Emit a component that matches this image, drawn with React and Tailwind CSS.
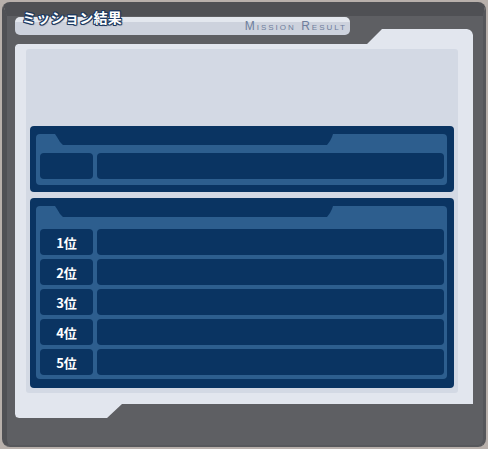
import React from "react";

const notchClip =
  "[clip-path:polygon(0_0,100%_0,calc(100%-1px)_3px,calc(100%-3px)_7px,calc(100%-6px)_100%,8px_100%,5px_8px,2px_3px)]";

function Frame({ children, top }) {
  return (
    <div className="relative rounded-[4px] bg-[#2d5e8e]">
      <div
        className={`absolute left-[19px] top-0 h-[11px] w-[278px] bg-[#0a3462] ${notchClip}`}
      />
      <div className={top}>{children}</div>
    </div>
  );
}

function Row({ label }) {
  return (
    <div className="flex h-[26px] gap-[4px]">
      <div className="flex w-[53px] items-center justify-center rounded-[4px] bg-[#0a3462] text-[13px] font-bold leading-none text-white [font-family:'Noto_Sans_CJK_JP','Noto_Sans',sans-serif]">
        {label}
      </div>
      <div className="flex-1 rounded-[4px] bg-[#0a3462]" />
    </div>
  );
}

export default function App() {
  const ranks = ["1位", "2位", "3位", "4位", "5位"];
  return (
    <div className="h-[449px] w-[488px] bg-[#b8b0ab] p-[2px]">
      <div className="relative h-full w-full rounded-[8px] border-t-[14px] border-r-[3px] border-b-[2px] border-l-[5px] border-t-[#4f5054] border-r-[#55565a] border-b-[#57585c] border-l-[#505155] bg-[#5e5f63]">
        {/* tab */}
        <div className="ml-[8px] mt-[1px] flex h-[18px] w-[335px] items-center justify-end rounded-[5px] bg-[linear-gradient(#e3e7ee_0,#e3e7ee_5px,#cdd2dd_5px)] pr-[3px]">
          <span className="text-[12px] leading-none tracking-[2px] text-[#6e7e9c] [font-family:'Liberation_Sans',sans-serif] [font-variant:small-caps]">
            Mission Result
          </span>
        </div>
        {/* title */}
        <div className="absolute left-[15px] top-[-7px] text-[14px] font-bold leading-[17px] tracking-[0.3px] text-white [font-family:'Noto_Sans_CJK_JP',sans-serif] [text-shadow:1px_0_0_#1c3a62,-1px_0_0_#1c3a62,0_1px_0_#1c3a62,0_-1px_0_#1c3a62,1px_1px_1px_#1c3a62,-1px_-1px_0_#1c3a62,1px_-1px_0_#1c3a62,-1px_1px_0_#1c3a62]">
          ミッション結果
        </div>
        {/* panel */}
        <div className="ml-[8px] -mt-[6px] h-[389px] w-[458px] bg-[#e2e6ee] pt-[20px] pr-[15px] pl-[11px] [clip-path:polygon(0_18px,1px_16px,3px_15px,352px_15px,367px_0,452px_0,455px_1px,457px_3px,458px_6px,458px_375px,107px_375px,92px_389px,4px_389px,1px_388px,0_385px)]">
          <div className="flex h-[344px] flex-col rounded-[3px] bg-[#d3d9e4] px-[4px] pt-[77px]">
            {/* box 1 */}
            <div className="h-[66px] rounded-[4px] bg-[#0a3462] pt-[8px] pr-[7px] pb-[7px] pl-[6px]">
              <Frame top="pt-[19px] pr-[3px] pb-[6px] pl-[4px]">
                <Row label="" />
              </Frame>
            </div>
            {/* box 2 */}
            <div className="mt-[6px] h-[190px] rounded-[4px] bg-[#0a3462] pt-[8px] pr-[7px] pb-[9px] pl-[6px]">
              <Frame top="flex flex-col gap-[4px] pt-[23px] pr-[3px] pb-[4px] pl-[4px]">
                {ranks.map((r) => (
                  <Row key={r} label={r} />
                ))}
              </Frame>
            </div>
          </div>
        </div>
      </div>
    </div>
  );
}
